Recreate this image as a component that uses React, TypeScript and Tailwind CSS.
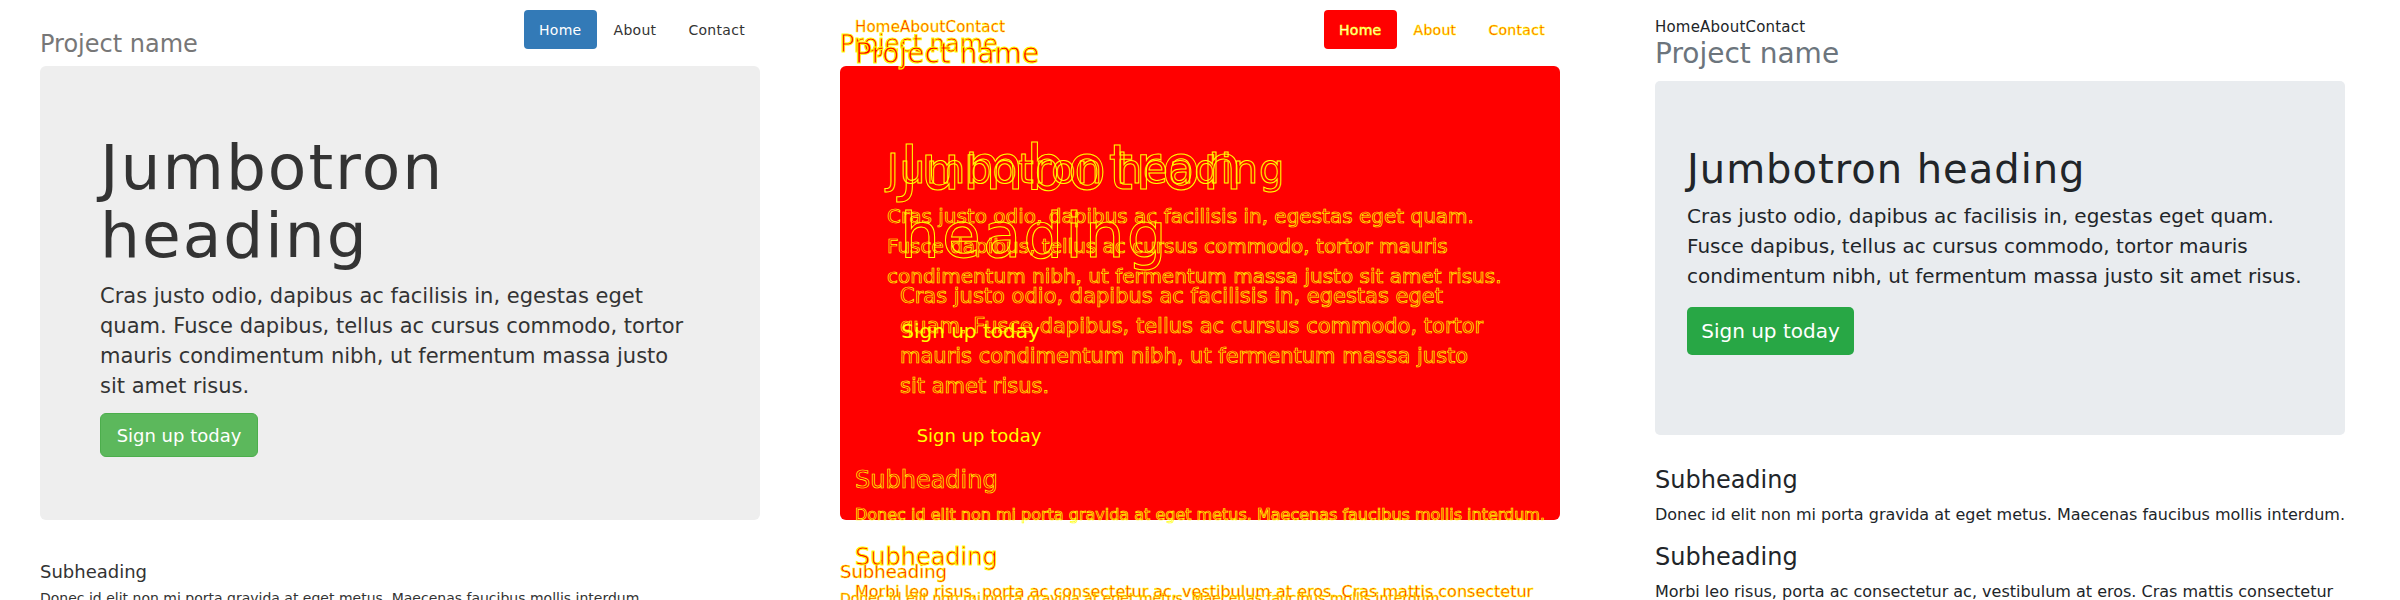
import React from 'react';

// diff styles: text on white shows red body with yellow edges, text inside the red area only yellow edges
const onWhite = 'text-[#ff0000] [-webkit-text-stroke:1px_#ffff00]';
const onRed = 'text-transparent [-webkit-text-stroke:1px_#ffff00]';
// thinner edges for small text, otherwise the stroke swallows the glyph
const onWhiteSm = 'text-[#ff0000] [-webkit-text-stroke:0.6px_#ffff00]';
const onRedSm = 'text-transparent [-webkit-text-stroke:0.7px_#ffff00]';

const leadBs3 = [
  'Cras justo odio, dapibus ac facilisis in, egestas eget',
  'quam. Fusce dapibus, tellus ac cursus commodo, tortor',
  'mauris condimentum nibh, ut fermentum massa justo',
  'sit amet risus.',
];

const leadBs4 = [
  'Cras justo odio, dapibus ac facilisis in, egestas eget quam.',
  'Fusce dapibus, tellus ac cursus commodo, tortor mauris',
  'condimentum nibh, ut fermentum massa justo sit amet risus.',
];

const Bs3Page: React.FC<{ diff?: boolean }> = ({ diff = false }) => {
  const pills = ['Home', 'About', 'Contact'];
  return (
    <div className="mx-[40px] w-[720px]">
      <div className="flex justify-between items-start pt-[10px] h-[64px] mb-[2px]">
        <h3 className={`mt-[14px] text-[24px] leading-[40px] ${diff ? onWhite : 'text-[#777]'}`}>Project name</h3>
        <nav className="flex gap-[2px]">
          {pills.map((p, i) => {
            const active = i === 0;
            const pillBg = active ? (diff ? 'bg-[#ff0000]' : 'bg-[#337ab7]') : '';
            const txt = active
              ? diff
                ? 'text-white [-webkit-text-stroke:0.6px_#ffff00]'
                : 'text-white'
              : diff
                ? onWhiteSm
                : 'text-[#333]';
            return (
              <span
                key={p}
                className={`h-[39px] px-[15px] flex items-center rounded-[4px] text-[14px] leading-[20px] tracking-[0.3px] ${pillBg} ${txt}`}
              >
                {p}
              </span>
            );
          })}
        </nav>
      </div>

      <div className={`h-[454px] rounded-[6px] pl-[60px] pr-[60px] pt-[68px] ${diff ? 'bg-[#ff0000]' : 'bg-[#eee]'}`}>
        <h1 className={`text-[63px] leading-[68px] tracking-[2px] whitespace-nowrap ${diff ? onRed : 'text-[#333]'}`}>
          Jumbotron
          <br />
          heading
        </h1>
        <p className={`mt-[11px] text-[21px] leading-[30px] whitespace-nowrap ${diff ? onRedSm : 'text-[#333]'}`}>
          {leadBs3.map((l) => (
            <span key={l} className="block">
              {l}
            </span>
          ))}
        </p>
        <div
          className={`mt-[12px] w-[158px] h-[44px] rounded-[6px] flex items-center justify-center text-[18px] whitespace-nowrap ${
            diff ? 'text-[#ffff00]' : 'bg-[#5cb85c] border border-[#4cae4c] text-white'
          }`}
        >
          Sign up today
        </div>
      </div>

      <h4 className={`mt-[42px] text-[18px] leading-[20px] ${diff ? onWhiteSm : 'text-[#333]'}`}>Subheading</h4>
      <p className={`mt-[6px] text-[14px] leading-[20px] whitespace-nowrap ${diff ? onWhiteSm : 'text-[#333]'}`}>
        Donec id elit non mi porta gravida at eget metus. Maecenas faucibus mollis interdum.
      </p>
    </div>
  );
};

const Bs4Page: React.FC<{ diff?: boolean }> = ({ diff = false }) => {
  const dark = 'text-[#212529]';
  return (
    <div className="mx-[55px] w-[690px]">
      <nav className={`pt-[15px] flex text-[15px] leading-[24px] tracking-[0.2px] ${diff ? onWhiteSm : dark}`}>
        <span>Home</span>
        <span>About</span>
        <span>Contact</span>
      </nav>
      <h3 className={`text-[28px] leading-[30px] ${diff ? onWhite : 'text-[#6c757d]'}`}>Project name</h3>

      <div className={`mt-[12px] h-[354px] rounded-[5px] px-[32px] pt-[64px] ${diff ? '' : 'bg-[#e9ecef]'}`}>
        <h1 className={`text-[40px] leading-[48px] tracking-[1px] whitespace-nowrap ${diff ? onRed : dark}`}>
          Jumbotron heading
        </h1>
        <p className={`mt-[8px] text-[20px] leading-[30px] whitespace-nowrap ${diff ? onRedSm : dark}`}>
          {leadBs4.map((l) => (
            <span key={l} className="block">
              {l}
            </span>
          ))}
        </p>
        <div
          className={`mt-[16px] w-[167px] h-[48px] rounded-[5px] flex items-center justify-center text-[20px] whitespace-nowrap ${
            diff ? 'text-[#ffff00]' : 'bg-[#28a745] text-white'
          }`}
        >
          Sign up today
        </div>
      </div>

      <h4 className={`mt-[31px] text-[24px] leading-[29px] ${diff ? onRedSm : dark}`}>Subheading</h4>
      <p className={`mt-[8px] text-[16px] leading-[24px] whitespace-nowrap ${diff ? onRedSm : dark}`}>
        Donec id elit non mi porta gravida at eget metus. Maecenas faucibus mollis interdum.
      </p>
      <h4 className={`mt-[16px] text-[24px] leading-[29px] ${diff ? onWhite : dark}`}>Subheading</h4>
      <p className={`mt-[8px] text-[16px] leading-[24px] whitespace-nowrap ${diff ? onWhiteSm : dark}`}>
        Morbi leo risus, porta ac consectetur ac, vestibulum at eros. Cras mattis consectetur
      </p>
    </div>
  );
};

export default function App() {
  return (
    <div className="flex w-[2400px] h-[600px] overflow-hidden bg-white font-['DejaVu_Sans',sans-serif]">
      <section className="w-[800px] h-[600px] shrink-0 overflow-hidden">
        <Bs3Page />
      </section>
      <section className="relative w-[800px] h-[600px] shrink-0 overflow-hidden">
        <Bs3Page diff />
        <div className="absolute inset-0">
          <Bs4Page diff />
        </div>
      </section>
      <section className="w-[800px] h-[600px] shrink-0 overflow-hidden">
        <Bs4Page />
      </section>
    </div>
  );
}
